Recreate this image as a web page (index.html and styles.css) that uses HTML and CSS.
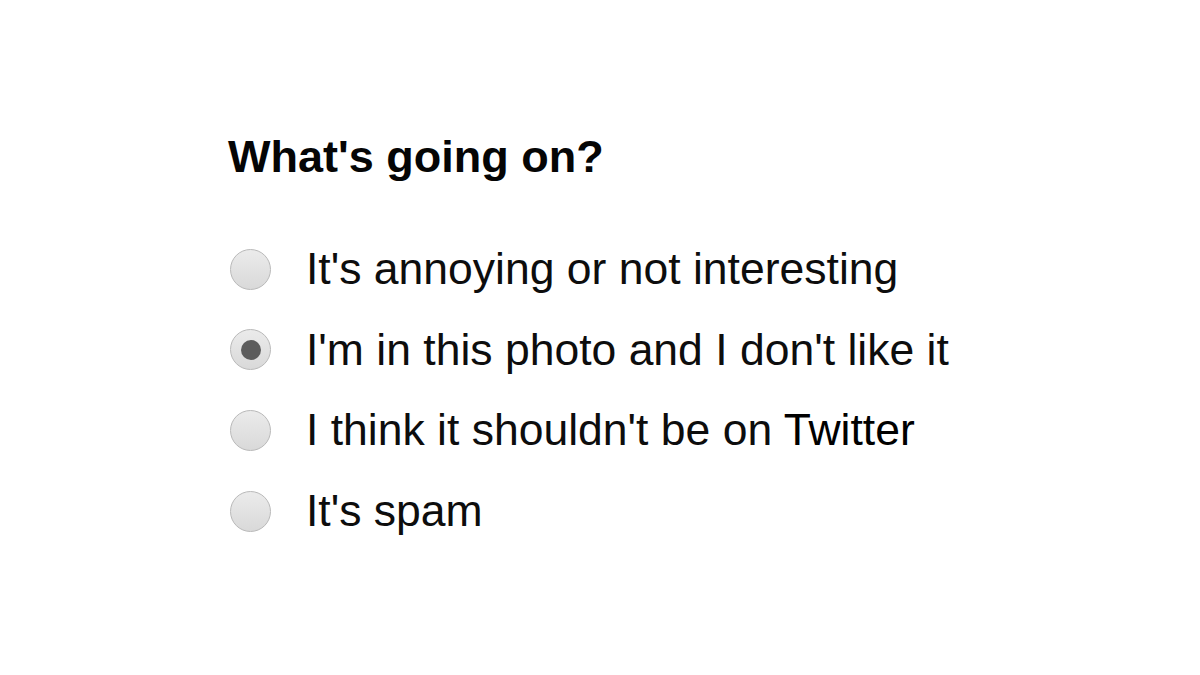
FILE: index.html
```html
<!DOCTYPE html>
<html>
<head>
<meta charset="utf-8">
<link rel="stylesheet" href="styles.css">
</head>
<body>
<div class="page">
  <h1 class="title">What's going on?</h1>
  <div class="options">
    <label class="option"><span class="radio"></span><span class="label">It's annoying or not interesting</span></label>
    <label class="option"><span class="radio checked"></span><span class="label">I'm in this photo and I don't like it</span></label>
    <label class="option"><span class="radio"></span><span class="label">I think it shouldn't be on <span class="brand">Twitter</span></span></label>
    <label class="option"><span class="radio"></span><span class="label">It's spam</span></label>
  </div>
</div>
</body>
</html>
```
FILE: styles.css
```css
html, body {
  margin: 0;
  padding: 0;
  background: #ffffff;
}
.page {
  width: 1200px;
  height: 675px;
  box-sizing: border-box;
  padding: 132px 0 0 228px;
  font-family: "Liberation Sans", Arial, sans-serif;
  color: #111111;
}
.title {
  margin: 0;
  font-size: 45px;
  font-weight: bold;
  line-height: 50px;
  color: #050505;
}
.options {
  display: flex;
  flex-direction: column;
  margin-top: 47px;
}
.option {
  display: flex;
  align-items: center;
  height: 80.6px;
}
.radio {
  box-sizing: border-box;
  width: 41px;
  height: 41px;
  margin-left: 2px;
  border-radius: 50%;
  border: 1.5px solid #b9b9b9;
  background: linear-gradient(#ebebeb, #d9d9d9);
  display: flex;
  align-items: center;
  justify-content: center;
  flex: none;
}
.radio.checked::after {
  content: "";
  width: 20px;
  height: 20px;
  border-radius: 50%;
  background: #5c5c5c;
}
.label {
  margin-left: 35px;
  font-size: 44.5px;
  line-height: 50px;
  color: #0d0d0d;
}
.brand {
  color: #000000;
}
```
